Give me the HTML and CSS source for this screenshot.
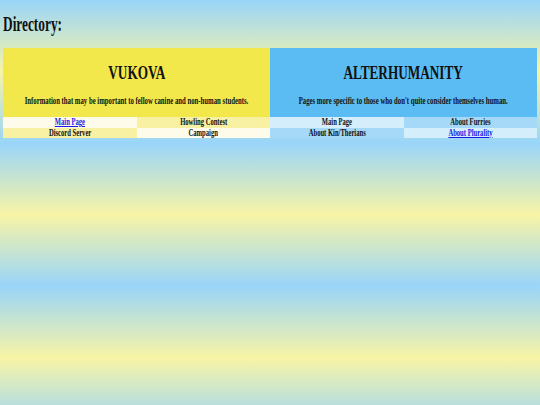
FILE: index.html
```html
<!DOCTYPE html>
<html lang="en">
<head>
<meta charset="utf-8">
<title>Directory</title>
<link rel="stylesheet" href="styles.css">
</head>
<body>
<div class="page">
  <h1 class="heading"><span class="sq sq-left">Directory:</span></h1>
  <div class="directory">
    <div class="head head-yellow">
      <h2 class="title"><span class="sq">VUKOVA</span></h2>
      <p class="sub"><span class="sq">Information that may be important to fellow canine and non-human students.</span></p>
    </div>
    <div class="head head-blue">
      <h2 class="title"><span class="sq">ALTERHUMANITY</span></h2>
      <p class="sub"><span class="sq">Pages more specific to those who don't quite consider themselves human.</span></p>
    </div>

    <div class="cell c-cream"><a href="#" class="link sq">Main Page</a></div>
    <div class="cell c-pale"><span class="sq">Howling Contest</span></div>
    <div class="cell c-ice"><span class="sq">Main Page</span></div>
    <div class="cell c-sky"><span class="sq">About Furries</span></div>

    <div class="cell c-pale"><span class="sq">Discord Server</span></div>
    <div class="cell c-cream"><span class="sq">Campaign</span></div>
    <div class="cell c-sky"><span class="sq">About Kin/Therians</span></div>
    <div class="cell c-ice"><a href="#" class="link sq">About Plurality</a></div>
  </div>
</div>
</body>
</html>
```
FILE: styles.css
```css
html {
  background: repeating-linear-gradient(to bottom, #99d5f9 0px, #f8f4a6 71.5px, #99d5f9 143px);
  min-height: 100%;
}
body {
  margin: 0;
  padding: 0 3px;
  font-family: "Liberation Serif", "Times New Roman", serif;
  font-weight: bold;
  color: #111;
}
.page {
  padding-top: 11.5px;
}
.sq {
  display: inline-block;
  transform: scaleX(0.66);
  transform-origin: center;
  white-space: nowrap;
}
.sq-left {
  transform-origin: left center;
}
.heading {
  margin: 0;
  font-size: 21px;
  line-height: 24px;
  height: 24px;
  font-weight: bold;
}
.heading .sq {
  transform: scaleX(0.635);
}
.directory {
  margin-top: 12.5px;
  display: grid;
  grid-template-columns: repeat(4, 1fr);
}
.head {
  grid-column: span 2;
  display: flex;
  flex-direction: column;
  align-items: center;
  padding: 15px 0 10px;
  text-align: center;
}
.head-yellow { background: #f3e84b; }
.head-blue { background: #5bbcf4; }
.title {
  margin: 0;
  font-size: 18px;
  line-height: 20px;
  font-weight: bold;
}
.title .sq {
  transform: scaleX(0.735);
}
.sub {
  margin: 13px 0 0;
  font-size: 9.5px;
  line-height: 11px;
}
.sub .sq {
  transform: scaleX(0.71);
}
.cell {
  height: 10.5px;
  font-size: 10px;
  line-height: 10.5px;
  text-align: center;
  overflow: visible;
}
.c-cream { background: #fffbea; }
.c-pale { background: #f8f0a2; }
.c-ice { background: #d4eefc; }
.c-sky { background: #a6d8f8; }
.link {
  color: #1a1ae8;
  text-decoration: underline;
}
```
